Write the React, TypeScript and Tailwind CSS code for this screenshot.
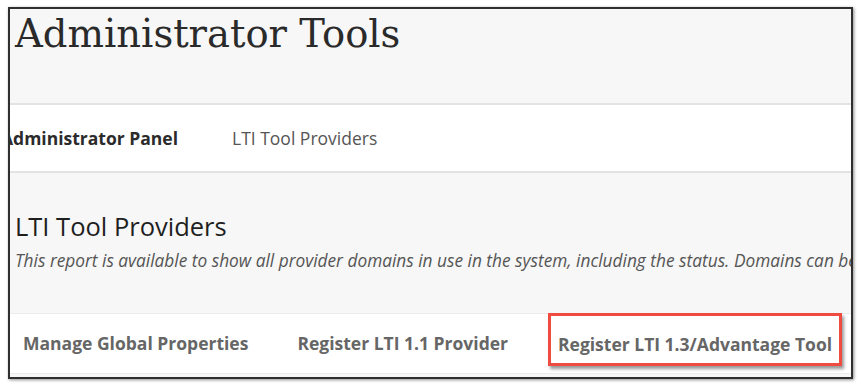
import React from 'react';

const sans = { fontFamily: '"Open Sans", "Liberation Sans", sans-serif' };

export default function App() {
  return (
    <div className="w-[861px] h-[388px] bg-white pt-[7px] pl-[8px]">
      <div
        className="w-[845px] h-[372px] border-2 border-[#2f2f2f] bg-[#f7f7f7] overflow-hidden flex flex-col shadow-[1px_1px_3px_rgba(0,0,0,0.45)]"
        style={sans}
      >
        {/* page title */}
        <div className="h-[94px] pl-[5px] pt-[2px]">
          <h1
            className="text-[38.5px] leading-[46px] text-[#2a2a2a]"
            style={{ fontFamily: '"DejaVu Serif", "Liberation Serif", serif' }}
          >
            Administrator Tools
          </h1>
        </div>

        {/* breadcrumbs */}
        <div className="h-[70px] bg-white border-y-2 border-[#e3e3e3] flex items-center text-[17.5px] whitespace-nowrap">
          <span className="font-bold text-[#2b2b2b] ml-[-9px]">Administrator Panel</span>
          <span className="text-[#555] ml-[54px]">LTI Tool Providers</span>
        </div>

        {/* section header */}
        <div className="h-[140px] pl-[5px] pt-[37px]">
          <h2 className="text-[25.5px] leading-[32px] text-[#1f1f1f]">LTI Tool Providers</h2>
          <p className="text-[17.3px] italic text-[#555] whitespace-nowrap leading-[24px] mt-[7px]">
            This report is available to show all provider domains in use in the system, including the status. Domains can be excluded
          </p>
        </div>

        {/* action bar */}
        <div className="h-[61px] bg-white border-y border-[#ececec] flex items-start text-[17.5px] font-bold text-[#666] whitespace-nowrap">
          <span className="ml-[13px] mt-[16px]">Manage Global Properties</span>
          <span className="ml-[49px] mt-[16px]">Register LTI 1.1 Provider</span>
          <span className="ml-[40px] mt-[-1px] px-[7px] pt-[15px] pb-[6px] border-[3px] border-[#ef4b40] shadow-[2px_3px_3px_rgba(0,0,0,0.4)]">
            Register LTI 1.3/Advantage Tool
          </span>
        </div>
      </div>
    </div>
  );
}
